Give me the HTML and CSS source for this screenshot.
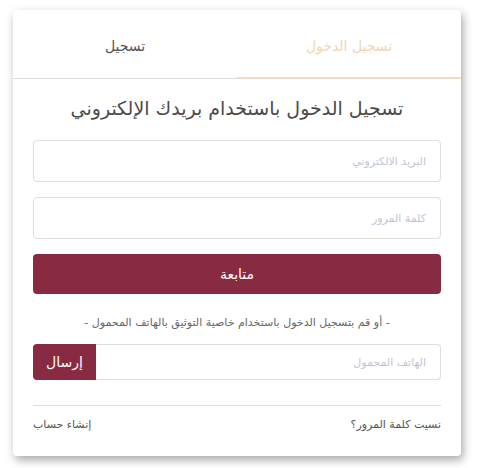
FILE: index.html
```html
<!DOCTYPE html>
<html lang="ar" dir="rtl">
<head>
<meta charset="utf-8">
<link rel="stylesheet" href="styles.css">
</head>
<body>
<div class="card">
  <div class="tabs">
    <div class="tab active">تسجيل الدخول</div>
    <div class="tab">تسجيل</div>
  </div>
  <div class="content">
    <h1 class="title">تسجيل الدخول باستخدام بريدك الإلكتروني</h1>
    <div class="field"><span class="ph">البريد الالكتروني</span></div>
    <div class="field"><span class="ph">كلمة المرور</span></div>
    <div class="btn">متابعة</div>
    <p class="or">- أو قم بتسجيل الدخول باستخدام خاصية التوثيق بالهاتف المحمول -</p>
    <div class="group">
      <div class="gfield"><span class="ph">الهاتف المحمول</span></div>
      <div class="send">إرسال</div>
    </div>
    <div class="links">
      <span>نسيت كلمة المرور؟</span>
      <span>إنشاء حساب</span>
    </div>
  </div>
</div>
</body>
</html>
```
FILE: styles.css
```css
* { box-sizing: border-box; }
html, body { margin: 0; background: #fff; }
body {
  padding: 10px 23px 12px 13px;
  font-family: "DejaVu Sans", sans-serif;
  direction: rtl;
}
.card {
  width: 448px;
  height: 446px;
  background: #fff;
  border-radius: 4px;
  box-shadow: 2px 4px 10px rgba(0,0,0,0.35);
}
.tabs { display: flex; height: 69px; }
.tab {
  flex: 1;
  display: flex;
  align-items: center;
  justify-content: center;
  font-size: 14px;
  color: #555;
  border-bottom: 1px solid #ddd;
  padding-top: 4px;
}
.tab.active { color: #f0d6b6; border-bottom: 2px solid #f2dcc4; }
.content { padding: 0 20px; display: flex; flex-direction: column; }
.title {
  margin: 18px 0 0;
  height: 43px;
  text-align: center;
  font-size: 19px;
  font-weight: normal;
  color: #4a4a4a;
}
.field {
  height: 42px;
  border: 1px solid #ddd;
  border-radius: 4px;
  display: flex;
  align-items: center;
  padding: 0 14px;
  margin-bottom: 15px;
}
.ph { font-size: 11px; color: #c3c3d8; }
.btn {
  height: 40px;
  background: #882b42;
  border-radius: 4px;
  color: #fff;
  display: flex;
  align-items: center;
  justify-content: center;
  font-size: 14px;
}
.or {
  margin: 22px 0 0;
  height: 28px;
  text-align: center;
  font-size: 11px;
  color: #666;
}
.group { display: flex; height: 36px; }
.gfield {
  flex: 1;
  border: 1px solid #ddd;
  border-left: none;
  border-radius: 0 4px 4px 0;
  display: flex;
  align-items: center;
  padding: 0 14px;
}
.send {
  width: 63px;
  background: #882b42;
  color: #fff;
  border-radius: 4px 0 0 4px;
  display: flex;
  align-items: center;
  justify-content: center;
  font-size: 14px;
}
.links {
  margin-top: 25px;
  border-top: 1px solid #ddd;
  padding-top: 12px;
  display: flex;
  justify-content: space-between;
  font-size: 11px;
  color: #555;
}
```
